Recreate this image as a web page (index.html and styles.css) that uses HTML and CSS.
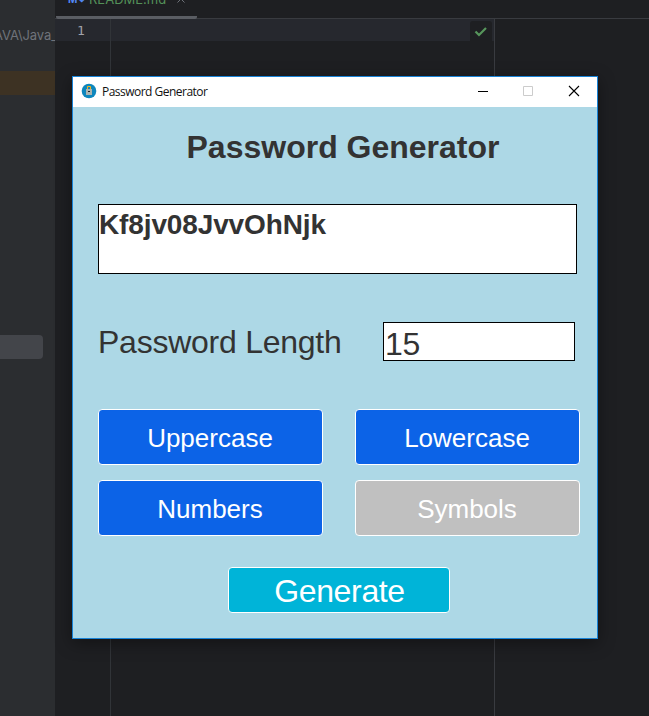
FILE: index.html
```html
<!DOCTYPE html>
<html lang="en">
<head>
<meta charset="utf-8">
<title>Password Generator</title>
<link rel="stylesheet" href="styles.css">
</head>
<body>
<div class="ide">
  <aside class="project">
    <div class="path">AVA\Java_</div>
    <div class="excluded"></div>
    <div class="hovered"></div>
  </aside>
  <main class="editor">
    <header class="tabs">
      <div class="tab"><span class="md">M↓</span><span class="file">README.md</span><svg class="tab-close" width="8" height="8" viewBox="0 0 8 8"><path d="M0.5 0.5l7 7M7.5 0.5l-7 7" stroke="#6f737a"/></svg></div>
    </header>
    <div class="code">
      <div class="gutter"><div class="line-no">1</div></div>
      <div class="text">
        <div class="current-line">
          <div class="inspection">
            <svg width="14" height="12" viewBox="0 0 14 12"><path d="M1.5 5.5 5 9 12 2" fill="none" stroke="#57965c" stroke-width="2.2"/></svg>
          </div>
        </div>
      </div>
      <div class="beyond"></div>
    </div>
  </main>
</div>
<div class="window">
  <div class="titlebar">
    <svg class="app-icon" width="16" height="16" viewBox="0 0 16 16">
      <circle cx="8" cy="8" r="7.3" fill="#0d86bd"/>
      <path d="M6.5 7V3.5h3V7" fill="none" stroke="#f4b41a"/>
      <rect x="5" y="6" width="6" height="6" fill="#a9b3b0"/>
      <rect x="7" y="8" width="2" height="1" fill="#222"/>
    </svg>
    <span class="caption">Password Generator</span>
    <div class="controls">
      <svg width="12" height="12" viewBox="0 0 12 12"><path d="M2 6.5h10" stroke="#000"/></svg>
      <svg width="12" height="12" viewBox="0 0 12 12"><path d="M1.5 1.5h9v9h-9z" fill="none" stroke="#ccc"/></svg>
      <svg width="12" height="12" viewBox="0 0 12 12"><path d="M1 1 11 11M11 1 1 11" stroke="#000" stroke-width="1.1"/></svg>
    </div>
  </div>
  <div class="content">
    <h1>Password Generator</h1>
    <div class="output">Kf8jv08JvvOhNjk</div>
    <div class="length-row">
      <span class="length-label">Password Length</span>
      <div class="length-field">15</div>
    </div>
    <div class="toggles">
      <div class="button">Uppercase</div>
      <div class="button">Lowercase</div>
      <div class="button">Numbers</div>
      <div class="button off">Symbols</div>
    </div>
    <div class="button generate">Generate</div>
  </div>
</div>
</body>
</html>
```
FILE: styles.css
```css
* { box-sizing: border-box; }
body {
  margin: 0;
  width: 649px;
  height: 716px;
  overflow: hidden;
  position: relative;
  background: #1e1f22;
  font-family: "Liberation Sans", Arial, sans-serif;
}
svg { display: block; }

.ide { display: flex; height: 716px; }
.project {
  width: 55px;
  background: #2b2d30;
  overflow: hidden;
  padding-top: 26px;
}
.path {
  height: 45px;
  margin-left: -6px;
  font: 13px/19px Inter, sans-serif;
  letter-spacing: -0.1px;
  color: #6f737a;
  white-space: nowrap;
}
.excluded { height: 24px; background: #3d3223; }
.hovered {
  width: 43px;
  height: 24px;
  margin-top: 240px;
  border-radius: 0 4px 4px 0;
  background: #43454a;
}

.editor { flex: 1; display: flex; flex-direction: column; }
.tabs { height: 19px; border-bottom: 1px solid #393b40; }
.tab {
  display: flex;
  align-items: flex-end;
  width: 141px;
  height: 19px;
  margin-left: 1px;
  padding: 0 0 9px 12px;
  border-bottom: 3px solid #5a5d63;
  border-radius: 0 0 2px 2px;
  font: 13px/16px Inter, sans-serif;
  white-space: nowrap;
}
.md { width: 21px; font-size: 10px; font-weight: 700; color: #548af7; }
.file { color: #549159; letter-spacing: 0; }
.tab-close { margin: 0 0 4px 11px; }
.code { flex: 1; display: flex; }
.gutter { width: 56px; border-right: 1px solid #313438; }
.line-no {
  height: 22px;
  padding-left: 22px;
  background: #26282e;
  font: 13px/24px "DejaVu Sans Mono", monospace;
  color: #a1a3ab;
}
.text { width: 384px; border-right: 1px solid #393b40; }
.current-line {
  display: flex;
  justify-content: flex-end;
  height: 22px;
  padding: 2px 2px 0 0;
  background: #26282e;
}
.inspection {
  width: 22px;
  height: 20px;
  padding: 5px 0 0 4px;
  border-radius: 3px 3px 0 0;
  background: #1e1f22;
}

.window {
  position: absolute;
  left: 72px;
  top: 76px;
  width: 526px;
  height: 563px;
  border: 1px solid #1883d7;
  background: #add8e6;
  box-shadow: 0 4px 16px rgba(0, 0, 0, 0.4);
}
.titlebar {
  display: flex;
  align-items: center;
  height: 30px;
  padding: 0 17px 0 8px;
  background: #fff;
}
.app-icon { margin-bottom: 2px; }
.caption {
  margin-left: 5px;
  font: 12px/16px "Open Sans", "Noto Sans", sans-serif;
  letter-spacing: -0.52px;
  color: #111;
}
.controls { display: flex; gap: 34px; margin: 0 0 2px auto; }

.content { padding: 0 17px 0 25px; color: #333; }
h1 {
  margin: 0 0 0 8px;
  padding-top: 20px;
  height: 97px;
  font-size: 32px;
  line-height: 40px;
  text-align: center;
}
.output {
  width: 479px;
  height: 70px;
  padding-top: 3px;
  border: 1px solid #000;
  background: #fff;
  font-size: 28px;
  font-weight: 700;
  line-height: 34px;
  letter-spacing: -0.13px;
}
.length-row { display: flex; margin-top: 48px; height: 39px; }
.length-label {
  width: 285px;
  font-size: 32px;
  line-height: 40px;
  letter-spacing: -0.25px;
}
.length-field {
  width: 192px;
  height: 39px;
  padding-left: 1px;
  border: 1px solid #000;
  background: #fff;
  font-size: 32px;
  line-height: 43px;
  letter-spacing: -0.25px;
}
.toggles {
  display: grid;
  grid-template-columns: 225px 225px;
  gap: 15px 32px;
  margin-top: 48px;
}
.button {
  height: 56px;
  padding-right: 1px;
  border: 1px solid #fff;
  border-radius: 4px;
  background: #0c63e7;
  color: #fff;
  font-size: 26px;
  line-height: 57px;
  text-align: center;
}
.off { background: #c0c0c0; }
.generate {
  width: 222px;
  height: 46px;
  margin: 31px 0 0 130px;
  padding: 0 0 0 1px;
  background: #00b4d8;
  font-size: 32px;
  line-height: 46px;
  letter-spacing: -0.35px;
}
```
